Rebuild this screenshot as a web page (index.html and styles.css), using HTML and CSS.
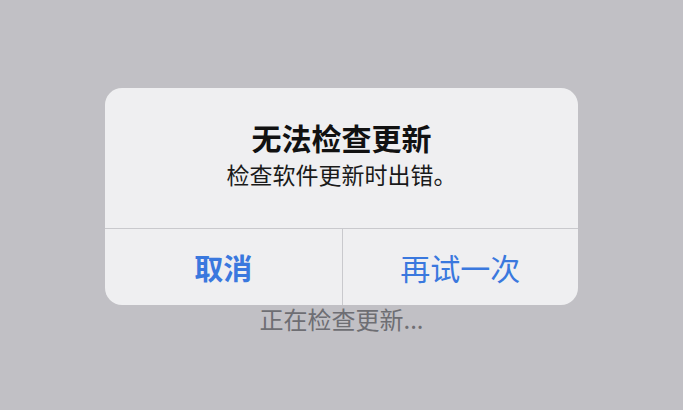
FILE: index.html
```html
<!DOCTYPE html>
<html lang="zh-CN">
<head>
	<meta charset="UTF-8">
	<title>软件更新</title>
	<meta name="viewport" content="width=device-width, initial-scale=1.0">
	<link rel="stylesheet" href="styles.css">
</head>
<body>
	<div class="screen">
		<div class="alert">
			<div class="alert_body">
				<h2 class="alert_title">无法检查更新</h2>
				<p class="alert_msg">检查软件更新时出错。</p>
			</div>
			<div class="alert_actions">
				<button class="alert_btn alert_btn--cancel">取消</button>
				<button class="alert_btn">再试一次</button>
			</div>
		</div>
		<p class="status">正在检查更新...</p>
	</div>
</body>
</html>
```

FILE: styles.css
```css
*{
	margin: 0;
	padding: 0;
	box-sizing: border-box;
}
html, body {
	height: 100%;
}
body {
	background-color: #c1c0c5;
	font-family: "Noto Sans CJK SC", "Noto Sans", sans-serif;
	overflow: hidden;
}
.screen {
	display: flex;
	flex-direction: column;
	align-items: center;
	padding-top: 88px;
}
.alert {
	width: 473px;
	background-color: #efeff1;
	border-radius: 17px;
	overflow: hidden;
}
.alert .alert_body {
	height: 141px;
	padding-top: 31px;
	text-align: center;
	border-bottom: 1px solid #c9c9cd;
}
.alert .alert_title {
	font-size: 30px;
	line-height: 36px;
	font-weight: 700;
	color: #111;
}
.alert .alert_msg {
	margin-top: 4px;
	font-size: 23px;
	line-height: 30px;
	color: #1a1a1a;
}
.alert .alert_actions {
	display: grid;
	grid-template-columns: 1fr 1fr;
	height: 76px;
}
.alert .alert_btn {
	border: none;
	background: none;
	font-family: inherit;
	font-size: 29px;
	line-height: 36px;
	color: #3a78de;
}
.alert .alert_btn + .alert_btn {
	font-size: 30px;
	border-left: 1px solid #c9c9cd;
}
.alert .alert_btn--cancel {
	font-weight: 700;
}
.status {
	font-size: 24px;
	line-height: 28px;
	color: #6e6e73;
}
```
